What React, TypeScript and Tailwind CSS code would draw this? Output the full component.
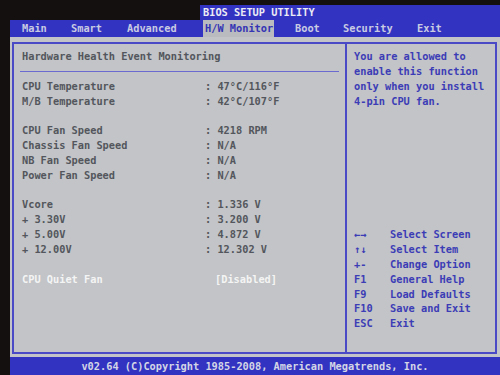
import React from 'react'

const BLUE = 'bg-[#3333c2]'

type Row = { label?: string; value?: string; white?: boolean }

const rows: Row[] = [
  { label: 'CPU Temperature', value: ': 47°C/116°F' },
  { label: 'M/B Temperature', value: ': 42°C/107°F' },
  {},
  { label: 'CPU Fan Speed', value: ': 4218 RPM' },
  { label: 'Chassis Fan Speed', value: ': N/A' },
  { label: 'NB Fan Speed', value: ': N/A' },
  { label: 'Power Fan Speed', value: ': N/A' },
  {},
  { label: 'Vcore', value: ': 1.336 V' },
  { label: '+ 3.30V', value: ': 3.200 V' },
  { label: '+ 5.00V', value: ': 4.872 V' },
  { label: '+ 12.00V', value: ': 12.302 V' },
  {},
  { label: 'CPU Quiet Fan', value: '[Disabled]', white: true },
]

const keys = [
  ['←→', 'Select Screen'],
  ['↑↓', 'Select Item'],
  ['+-', 'Change Option'],
  ['F1', 'General Help'],
  ['F9', 'Load Defaults'],
  ['F10', 'Save and Exit'],
  ['ESC', 'Exit'],
]

export default function App() {
  return (
    <div
      className="flex h-[375px] w-[500px] flex-col overflow-hidden whitespace-nowrap bg-[#141010] text-[10.3px] font-bold leading-[14.85px]"
      style={{ fontFamily: '"DejaVu Sans Mono", "Liberation Mono", monospace' }}
    >
      {/* title */}
      <div className="flex h-[20px] shrink-0">
        <div className="w-[200px]" />
        <div className={`mt-[5px] h-[15px] flex-1 ${BLUE} pl-[3px] leading-[15px] text-[#ececf4]`}>
          BIOS SETUP UTILITY
        </div>
      </div>

      {/* tabs */}
      <div className={`ml-[10px] flex h-[17px] shrink-0 items-center ${BLUE} text-[#c9cbe2]`}>
        <span className="ml-[12px] w-[49px]">Main</span>
        <span className="w-[56px]">Smart</span>
        <span className="w-[76px]">Advanced</span>
        <span className="flex h-full w-[71px] shrink-0 items-center bg-[#b9bbbe] pl-[2px] text-[#3434b4]">H/W Monitor</span>
        <span className="ml-[21px] w-[48px]">Boot</span>
        <span className="w-[74px]">Security</span>
        <span>Exit</span>
      </div>

      {/* main */}
      <div className="ml-[10px] flex min-h-0 flex-1 bg-[#c2c4c7] pb-[3px] pl-[2px] pr-[3px] pt-[5px]">
        <div className="flex flex-1 border-2 border-[#4a4ac6]">
          <div className="flex w-[333px] flex-col border-r-2 border-[#4a4ac6] pt-[5px] text-[#53565c]">
            <div className="pl-[8px]">Hardware Health Event Monitoring</div>
            <div className="flex h-[14.85px] items-center px-[6px]">
              <div className="h-[1px] w-full bg-[#6a6ad0]" />
            </div>
            {rows.map((r, i) =>
              r.label ? (
                <div key={i} className={`flex pl-[8px] ${r.white ? 'text-[#f4f4f4]' : ''}`}>
                  <span className="w-[183px]">{r.label}</span>
                  <span className={r.white ? 'pl-[10px]' : ''}>{r.value}</span>
                </div>
              ) : (
                <div key={i} className="h-[14.85px]" />
              ),
            )}
          </div>

          <div className="flex flex-1 flex-col pl-[7px] pt-[5px] text-[#3c3cb6]">
            <div>You are allowed to</div>
            <div>enable this function</div>
            <div>only when you install</div>
            <div>4-pin CPU fan.</div>
            <div className="h-[118.8px]" />
            {keys.map(([k, d]) => (
              <div key={k} className="flex">
                <span className="w-[36px]">{k}</span>
                <span>{d}</span>
              </div>
            ))}
          </div>
        </div>
      </div>

      {/* footer */}
      <div className={`ml-[10px] flex h-[18px] shrink-0 items-center justify-center ${BLUE} text-[#d4d6e6]`}>
        v02.64 (C)Copyright 1985-2008, American Megatrends, Inc.
      </div>
    </div>
  )
}
